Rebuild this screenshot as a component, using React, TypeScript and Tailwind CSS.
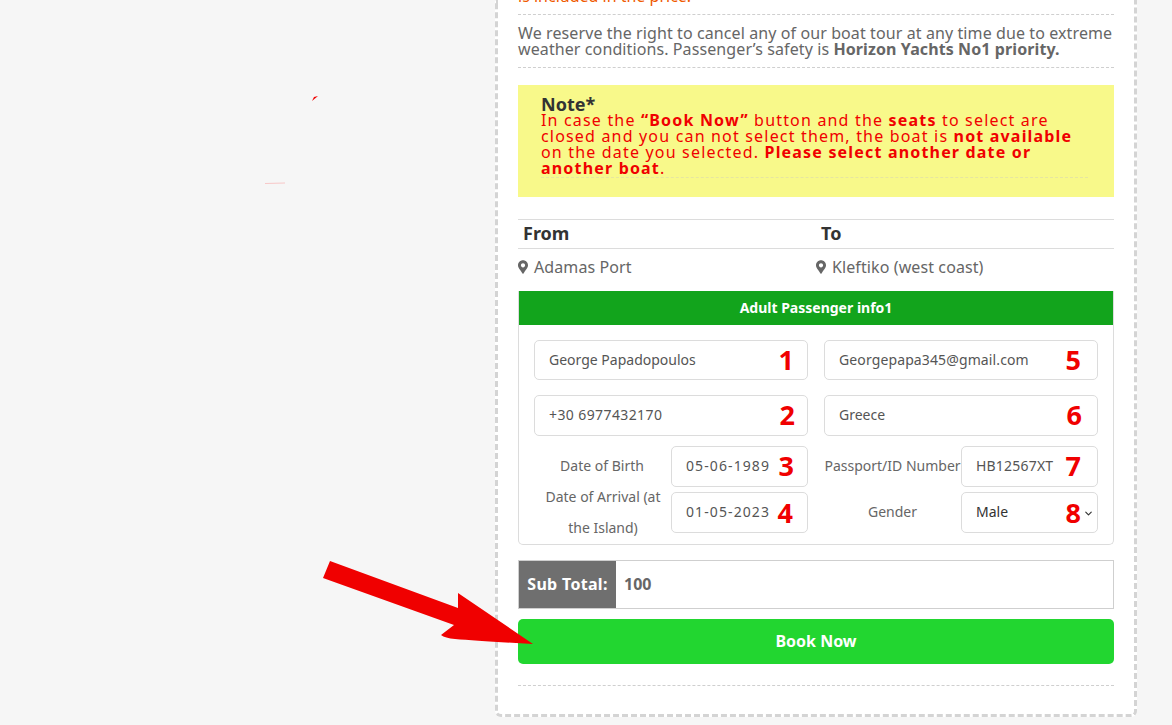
import React from 'react';
import { FaMapMarkerAlt } from 'react-icons/fa';
import { ChevronDown } from 'lucide-react';

const font = "font-['Noto_Sans',sans-serif]";

interface FieldProps {
  value: string;
  num: string;
  numClass: string;
  className: string;
  textClass?: string;
  dark?: boolean;
  children?: React.ReactNode;
}

// input look-alike with the red number painted over it
const Field: React.FC<FieldProps> = ({ value, num, numClass, className, textClass = '', dark, children }) => {
  return (
    <div className={`relative flex items-center bg-white border border-[#dcdcdc] rounded-[5px] pl-[14px] pb-[2px] text-[14px] ${dark ? 'text-[#333]' : 'text-[#555]'} ${className}`}>
      <span className={`whitespace-nowrap ${textClass}`}>{value}</span>
      <span className={`absolute top-1/2 -translate-y-1/2 text-[#f00000] font-bold text-[27px] leading-none font-['Open_Sans',sans-serif] ${numClass}`}>{num}</span>
      {children}
    </div>
  );
};

const Dashed = ({ className = '' }: { className?: string }) => (
  <div className={`border-t border-dashed border-[#cfcfcf] ${className}`} />
);

const App: React.FC = () => {
  return (
    <div className={`relative h-[725px] w-[1172px] overflow-hidden bg-[#f6f6f6] ${font} text-[#666]`}>
      <div className="flex">
        <div className="w-[495px] shrink-0" />

        {/* card */}
        <div className="w-[642px] h-[717px] bg-white border-[3px] border-t-0 border-dashed border-[#d4d4d4] rounded-b-[6px] px-[20px]">
          <p className="text-[#ef5a00] text-[16px] leading-[16px] h-[14px] -mt-[12px]">is included in the price.</p>
          <Dashed className="mt-[12px]" />

          <p className="mt-[10px] text-[16px] leading-[16px] tracking-[0.1px] whitespace-nowrap">
            We reserve the right to cancel any of our boat tour at any time due to extreme<br />
            weather conditions. Passenger’s safety is <b>Horizon Yachts No1 priority.</b>
          </p>
          <Dashed className="mt-[10px]" />

          {/* note */}
          <div className="mt-[17px] h-[112px] bg-[#f8f98a] pl-[23px] pr-[26px] pt-[11px]">
            <div className="text-[#333] font-bold text-[18px] leading-[16px]">Note*</div>
            <p className="text-[#f00000] text-[16px] leading-[16px] tracking-[1.18px] whitespace-nowrap">
              In case the <b>“Book Now”</b> button and the <b>seats</b> to select are<br />
              closed and you can not select them, the boat is <b>not available</b><br />
              on the date you selected. <b>Please select another date or</b><br />
              <b>another boat</b>.
            </p>
            <Dashed className="mt-[1px] border-[#e6e6a0]" />
          </div>

          {/* from / to */}
          <div className="mt-[22px] border-t border-[#dcdcdc]">
            <div className="flex h-[29px] items-center pb-[2px] border-b border-[#dcdcdc] text-[18px] font-bold text-[#333]">
              <div className="w-[298px] pl-[5px]">From</div>
              <div className="pl-[5px]">To</div>
            </div>
            <div className="flex h-[37px] items-center pb-[2px] text-[16px] tracking-[0.1px]">
              <div className="flex w-[298px] items-center gap-[6px]"><FaMapMarkerAlt className="w-[10px] h-[14px]" />Adamas Port</div>
              <div className="flex items-center gap-[6px]"><FaMapMarkerAlt className="w-[10px] h-[14px]" />Kleftiko (west coast)</div>
            </div>
          </div>

          {/* passenger box */}
          <div className="mt-[5px] border border-t-0 border-[#dcdcdc] rounded-b-[5px] h-[254px]">
            <div className="h-[34px] pb-[2px] bg-[#12a41c] text-white font-bold text-[14px] flex items-center justify-center">Adult Passenger info1</div>
            <div className="px-[15px] pt-[15px]">
              <div className="flex gap-[16px]">
                <Field className="w-[274px] h-[40px]" value="George Papadopoulos" num="1" numClass="right-[13px] -mt-[1px]" />
                <Field className="w-[274px] h-[40px]" textClass="tracking-[0.12px]" value="Georgepapa345@gmail.com" num="5" numClass="right-[16px] -mt-[1px]" />
              </div>
              <div className="flex gap-[16px] mt-[15px]">
                <Field className="w-[274px] h-[41px]" textClass="tracking-[0.4px]" value="+30 6977432170" num="2" numClass="right-[12px] -mt-[2px]" />
                <Field className="w-[274px] h-[41px]" value="Greece" num="6" numClass="right-[15px] -mt-[2px]" />
              </div>
              <div className="flex gap-[16px] mt-[10px]">
                <div className="w-[274px] flex items-center">
                  <div className="w-[137px] -ml-[15px] pl-[29px] pb-[2px] text-center text-[14px] whitespace-nowrap">Date of Birth</div>
                  <Field className="ml-auto w-[137px] h-[41px]" textClass="tracking-[1.1px]" value="05-06-1989" num="3" numClass="right-[13px] -mt-[2px]" />
                </div>
                <div className="w-[274px] flex items-center">
                  <div className="w-[137px] pb-[2px] text-center text-[14px] whitespace-nowrap">Passport/ID Number</div>
                  <Field className="w-[137px] h-[41px]" textClass="tracking-[0.2px]" value="HB12567XT" num="7" numClass="right-[16px] -mt-[2px]" />
                </div>
              </div>
              <div className="flex gap-[16px] -mt-[6px]">
                <div className="w-[274px] flex items-center">
                  <div className="w-[152px] -ml-[15px] pl-[19px] pr-[3px] text-center text-[14px] leading-[31px] whitespace-nowrap">Date of Arrival (at<br />the Island)</div>
                  <Field className="ml-auto w-[137px] h-[41px]" textClass="tracking-[1.1px]" value="01-05-2023" num="4" numClass="right-[14px]" />
                </div>
                <div className="w-[274px] flex items-center">
                  <div className="w-[137px] pb-[2px] text-center text-[14px]">Gender</div>
                  <Field className="w-[137px] h-[41px]" value="Male" num="8" numClass="right-[16px]" dark>
                    <ChevronDown className="absolute right-[3px] top-[15px] w-[11px] h-[11px] text-[#333]" strokeWidth={2.5} />
                  </Field>
                </div>
              </div>
            </div>
          </div>

          {/* sub total */}
          <div className="mt-[15px] flex h-[49px] border border-[#cfcfcf] text-[16px] font-bold">
            <div className="w-[97px] pb-[2px] bg-[#6f6f6f] text-white tracking-[0.3px] flex items-center justify-center">Sub Total:</div>
            <div className="flex items-center pl-[8px] pb-[2px]">100</div>
          </div>

          <button className="mt-[10px] w-full h-[45px] pb-[2px] bg-[#22d630] rounded-[5px] text-white font-bold text-[16px]">Book Now</button>
          <Dashed className="mt-[21px]" />
        </div>
      </div>

      {/* red arrow drawn over the page */}
      <svg className="absolute left-0 top-0 pointer-events-none" width="1172" height="725" viewBox="0 0 1172 725">
        <path d="M330 561L458 608L458 593L533 644Q480 641 455 639Q445 638 441 635L454 625L323 578Z" fill="#f00000" />
        <path d="M312 101L314 97L318 96Z" fill="#f00000" />
        <path d="M265 183.500L285 183" stroke="#f8c8c8" strokeWidth="1" />
      </svg>
    </div>
  );
};

export default App;
